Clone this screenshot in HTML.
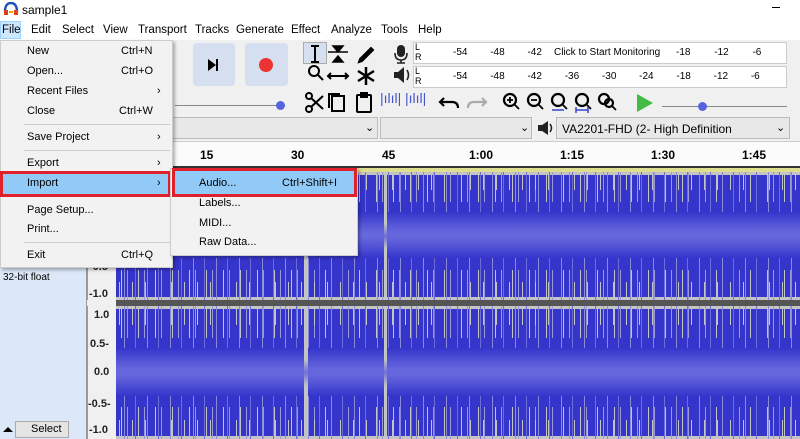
<!DOCTYPE html>
<html><head><meta charset="utf-8"><style>
*{margin:0;padding:0;box-sizing:border-box}
body{width:800px;height:439px;overflow:hidden;background:#f0f0f0;font-family:"Liberation Sans",Arial,sans-serif;font-size:11px;color:#000;position:relative}
.a{position:absolute}
.t{position:absolute;white-space:nowrap}
.btn{position:absolute;background:#d6dff0;border-radius:4px}
.menu{position:absolute;background:#f2f2f2;border:1px solid #ccc;box-shadow:2px 2px 3px rgba(0,0,0,.3)}
.mi{position:absolute;font-size:11px}
.sep{position:absolute;height:1px;background:#ccc}
.wave{position:absolute;left:116px;width:684px;background:#c4c4c4;overflow:hidden}
.wave .d{position:absolute;left:0;right:0;background:#3535cc}
.wave .g1{position:absolute;left:0;right:0;background:repeating-linear-gradient(90deg,transparent 0 5px,#c4c4c4 5px 6px,transparent 6px 11px,#9a9ad8 11px 12px,transparent 12px 17px)}
.wave .g2{position:absolute;left:0;right:0;background:repeating-linear-gradient(90deg,transparent 0 3px,#c4c4c4 3px 4px,transparent 4px 13px)}
.wave .g3{position:absolute;left:0;right:0;background:repeating-linear-gradient(90deg,transparent 0 8px,#8a8ad8 8px 9px,transparent 9px 19px,#6d6dd8 19px 20px,transparent 20px 23px)}
.wave .l{position:absolute;left:0;right:0}
.vr{position:absolute;left:87px;width:29px;background:#f0f0f0;border-left:1px solid #999}
.vl{position:absolute;right:3px;font-weight:bold;font-size:11px;color:#222}
</style></head><body>
<div class="a" style="left:0;top:0;width:800px;height:20px;background:#fff"></div>
<svg class="a" style="left:3px;top:2px" width="16" height="14"><path d="M2 10 Q2 1 8 1 Q14 1 14 10" stroke="#2050c0" stroke-width="2.4" fill="none"/><rect x="1" y="8" width="4" height="5" fill="#e04020"/><rect x="11" y="8" width="4" height="5" fill="#e04020"/><rect x="6" y="9" width="4" height="2" fill="#f0a000"/></svg>
<div class="t" style="left:22px;top:3px;font-size:12px">sample1</div>
<div class="a" style="left:772px;top:7px;width:8px;height:1px;background:#000"></div>
<div class="a" style="left:0;top:20px;width:800px;height:20px;background:#fff"></div>
<div class="a" style="left:0;top:21px;width:21px;height:18px;background:#cce8ff;border:1px solid #99d1ff"></div>
<div class="t" style="left:2px;top:24px;font-size:11.5px">File</div>
<div class="t" style="left:31px;top:24px;font-size:11.5px">Edit</div>
<div class="t" style="left:62px;top:24px;font-size:11.5px">Select</div>
<div class="t" style="left:103px;top:24px;font-size:11.5px">View</div>
<div class="t" style="left:138px;top:24px;font-size:11.5px">Transport</div>
<div class="t" style="left:195px;top:24px;font-size:11.5px">Tracks</div>
<div class="t" style="left:236px;top:24px;font-size:11.5px">Generate</div>
<div class="t" style="left:291px;top:24px;font-size:11.5px">Effect</div>
<div class="t" style="left:331px;top:24px;font-size:11.5px">Analyze</div>
<div class="t" style="left:381px;top:24px;font-size:11.5px">Tools</div>
<div class="t" style="left:418px;top:24px;font-size:11.5px">Help</div>
<div class="a" style="left:0;top:40px;width:800px;height:100px;background:#f0f0f0"></div>
<div class="btn" style="left:193px;top:43px;width:42px;height:43px"></div>
<div class="a" style="left:208px;top:59px;width:0;height:0;border-left:8px solid #000;border-top:6px solid transparent;border-bottom:6px solid transparent"></div>
<div class="a" style="left:216px;top:59px;width:2px;height:12px;background:#000"></div>
<div class="btn" style="left:245px;top:43px;width:43px;height:43px"></div>
<div class="a" style="left:259px;top:58px;width:14px;height:14px;border-radius:50%;background:#e33"></div>
<div class="a" style="left:175px;top:105px;width:108px;height:1px;background:#888"></div>
<div class="a" style="left:276px;top:101px;width:9px;height:9px;border-radius:50%;background:#5566dd"></div>
<!-- tools -->
<div class="a" style="left:303px;top:42px;width:24px;height:22px;background:#d6dff0;border:1px solid #aaa"></div>
<svg class="a" style="left:300px;top:40px" width="80" height="76" fill="none" stroke="#000" stroke-width="2">
<path d="M11 6h8M15 6v16M11 22h8"/>
<path d="M28 12h20M33 6h10l-5 6zM33 22h10l-5-6z" fill="#000" stroke-width="1.5"/>
<path d="M59 22l3-1 11-11-2-2-11 11z" fill="#000"/>
<circle cx="14" cy="31" r="5"/><path d="M18 35l5 5"/>
<path d="M28 36h20M31 33l-3 3 3 3M45 33l3 3-3 3"/>
<path d="M66 27v18M58 31l16 10M74 31l-16 10" stroke-width="2.5"/>
<circle cx="9" cy="56" r="3"/><circle cx="9" cy="69" r="3"/><path d="M11 58l12 11M11 67l12-11"/>
<rect x="32" y="56" width="12" height="15"/><path d="M29 68v-14h11"/>
<rect x="57" y="55" width="14" height="17" rx="1"/><path d="M61 53h6v4h-6z" fill="#000"/>
</svg>
<div class="t" style="left:380px;top:90px;font-size:14px;color:#4455cc">|ılıl|</div>
<div class="t" style="left:405px;top:90px;font-size:14px;color:#4455cc">|ılıl|</div>
<svg class="a" style="left:436px;top:90px" width="200" height="24" fill="none" stroke="#000" stroke-width="2.2">
<path d="M8 8l-4 4 4 4M4 12h12c4 0 6 2 6 6"/>
<path d="M46 8l4 4-4 4M50 12H38c-4 0-6 2-6 6" stroke="#aaa"/>
<circle cx="74" cy="10" r="6"/><path d="M78 14l5 5M71 10h6M74 7v6" stroke-width="1.8"/>
<circle cx="98" cy="10" r="6"/><path d="M102 14l5 5M95 10h6" stroke-width="1.8"/>
<circle cx="122" cy="10" r="6"/><path d="M126 14l5 5" stroke-width="1.8"/><path d="M116 20h12" stroke="#3344cc" stroke-width="1.5"/>
<circle cx="146" cy="10" r="6"/><path d="M150 14l5 5" stroke-width="1.8"/><path d="M140 20h12M140 17v6M152 17v6" stroke="#3344cc" stroke-width="1.5"/>
<circle cx="168" cy="9" r="5"/><circle cx="173" cy="13" r="4"/><path d="M176 16l4 4" stroke-width="1.8"/>
</svg>
<div class="a" style="left:637px;top:94px;width:0;height:0;border-left:16px solid #44bb44;border-top:9px solid transparent;border-bottom:9px solid transparent"></div>
<div class="a" style="left:662px;top:106px;width:125px;height:1px;background:#888"></div>
<div class="a" style="left:698px;top:102px;width:9px;height:9px;border-radius:50%;background:#5566dd"></div>
<!-- meters -->
<svg class="a" style="left:390px;top:42px" width="22" height="46"><rect x="7" y="3" width="8" height="12" rx="4" fill="#222"/><path d="M5 11q0 7 6 7q6 0 6-7M11 18v3M7 21h8" stroke="#222" stroke-width="1.6" fill="none"/><path d="M4 30h4l6-5v16l-6-5H4z" fill="#222"/><path d="M17 28q3 5 0 10" stroke="#222" stroke-width="1.6" fill="none"/></svg>
<div class="a" style="left:413px;top:42px;width:374px;height:22px;background:#fff;border:1px solid #ccc"></div>
<div class="a" style="left:413px;top:66px;width:374px;height:22px;background:#fff;border:1px solid #ccc"></div>
<div class="t" style="left:415px;top:42px;font-size:9px;line-height:10px">L<br>R</div>
<div class="t" style="left:415px;top:66px;font-size:9px;line-height:10px">L<br>R</div>
<div class="t" style="left:453px;top:47px;font-size:10px;word-spacing:20px">-54 -48 -42</div>
<div class="t" style="left:554px;top:47px;font-size:10px">Click to Start Monitoring</div>
<div class="t" style="left:676px;top:47px;font-size:10px;word-spacing:21px">-18 -12 -6 &nbsp;0</div>
<div class="t" style="left:453px;top:71px;font-size:10px;word-spacing:20px">-54 -48 -42 -36 -30 -24 -18 -12 -6 &nbsp;0</div>
<!-- device row -->
<div class="a" style="left:172px;top:117px;width:206px;height:22px;background:#e8e8e8;border:1px solid #bbb"></div>
<div class="t" style="left:365px;top:121px">⌄</div>
<svg class="a" style="left:536px;top:120px" width="18" height="16"><path d="M2 5h4l6-4v14l-6-4H2z" fill="#222"/><path d="M14 4q3 4 0 8" stroke="#222" stroke-width="1.6" fill="none"/></svg>
<div class="a" style="left:556px;top:117px;width:234px;height:22px;background:#e8e8e8;border:1px solid #bbb"></div>
<div class="t" style="left:562px;top:122px;font-size:12px">VA2201-FHD (2- High Definition</div>
<div class="t" style="left:776px;top:121px">⌄</div>
<div class="a" style="left:380px;top:117px;width:152px;height:22px;background:#e8e8e8;border:1px solid #bbb"></div>
<div class="t" style="left:520px;top:121px">⌄</div>
<!-- ruler -->
<div class="a" style="left:0;top:141px;width:800px;height:27px;background:#fbfbfb;border-top:1px solid #ccc"></div>
<div class="a" style="left:0;top:166px;width:800px;height:2px;background:#333"></div>
<div class="a" style="left:116px;top:168px;width:684px;height:4px;background:#dede90"></div>
<div class="t" style="left:200px;top:148px;font-weight:bold;font-size:12px">15</div>
<div class="t" style="left:291px;top:148px;font-weight:bold;font-size:12px">30</div>
<div class="t" style="left:382px;top:148px;font-weight:bold;font-size:12px">45</div>
<div class="t" style="left:469px;top:148px;font-weight:bold;font-size:12px">1:00</div>
<div class="t" style="left:560px;top:148px;font-weight:bold;font-size:12px">1:15</div>
<div class="t" style="left:651px;top:148px;font-weight:bold;font-size:12px">1:30</div>
<div class="t" style="left:742px;top:148px;font-weight:bold;font-size:12px">1:45</div>
<!-- track panel -->
<div class="a" style="left:0;top:168px;width:87px;height:271px;background:#dce7f7;border-right:1px solid #999"></div>
<div class="t" style="left:3px;top:272px;font-size:10px">32-bit float</div>
<div class="a" style="left:15px;top:421px;width:54px;height:17px;background:#e4e4e4;border:1px solid #aaa"></div>
<div class="t" style="left:31px;top:423px;font-size:11px">Select</div>
<div class="a" style="left:3px;top:427px;width:0;height:0;border-bottom:5px solid #000;border-left:5px solid transparent;border-right:5px solid transparent"></div>
<div class="vr" style="top:172px;height:128px"></div>
<div class="vr" style="top:306px;height:133px"></div>
<div class="vl" style="left:89px;top:261px">-0.5</div>
<div class="vl" style="left:89px;top:288px">-1.0</div>
<div class="vl" style="left:94px;top:309px">1.0</div>
<div class="vl" style="left:90px;top:338px">0.5-</div>
<div class="vl" style="left:94px;top:366px">0.0</div>
<div class="vl" style="left:88px;top:398px">-0.5-</div>
<div class="vl" style="left:89px;top:424px">-1.0</div>
<!-- waves -->
<div class="wave" style="top:172px;height:128px">
 <div class="d" style="top:3px;bottom:3px"></div>
 <div class="g1" style="top:0;height:30px"></div><div class="g2" style="top:0;height:18px"></div><div class="g3" style="top:0;height:42px"></div>
 <div class="g1" style="bottom:0;height:30px"></div><div class="g2" style="bottom:0;height:18px"></div><div class="g3" style="bottom:0;height:42px"></div>
 <div class="l" style="top:40px;height:46px;background:linear-gradient(#3535cc,#5858d8 30%,#6767dd 45%,#6767dd 55%,#5858d8 70%,#3535cc)"></div>
 <div class="a" style="left:188px;top:0;width:4px;height:128px;background:linear-gradient(#c4c4c4 40%,#7070d8 50%,#c4c4c4 60%)"></div>
 <div class="a" style="left:268px;top:0;width:3px;height:128px;background:linear-gradient(#c4c4c4 40%,#7070d8 50%,#c4c4c4 60%)"></div>
</div>
<div class="a" style="left:116px;top:300px;width:684px;height:6px;background:#555"></div>
<div class="wave" style="top:306px;height:133px">
 <div class="d" style="top:3px;bottom:3px"></div>
 <div class="g1" style="top:0;height:32px"></div><div class="g2" style="top:0;height:19px"></div><div class="g3" style="top:0;height:44px"></div>
 <div class="g1" style="bottom:0;height:32px"></div><div class="g2" style="bottom:0;height:19px"></div><div class="g3" style="bottom:0;height:44px"></div>
 <div class="l" style="top:42px;height:48px;background:linear-gradient(#3535cc,#5858d8 30%,#6767dd 45%,#6767dd 55%,#5858d8 70%,#3535cc)"></div>
 <div class="a" style="left:188px;top:0;width:4px;height:133px;background:linear-gradient(#c4c4c4 40%,#7070d8 50%,#c4c4c4 60%)"></div>
 <div class="a" style="left:268px;top:0;width:3px;height:133px;background:linear-gradient(#c4c4c4 40%,#7070d8 50%,#c4c4c4 60%)"></div>
</div>
<!-- file menu -->
<div class="menu" style="left:0;top:40px;width:173px;height:228px"></div>
<div class="mi" style="left:27px;top:45px">New</div><div class="mi" style="left:121px;top:45px">Ctrl+N</div>
<div class="mi" style="left:27px;top:65px">Open...</div><div class="mi" style="left:121px;top:65px">Ctrl+O</div>
<div class="mi" style="left:27px;top:85px">Recent Files</div><div class="mi" style="left:157px;top:85px">›</div>
<div class="mi" style="left:27px;top:105px">Close</div><div class="mi" style="left:119px;top:105px">Ctrl+W</div>
<div class="sep" style="left:24px;top:124px;width:146px"></div>
<div class="mi" style="left:27px;top:131px">Save Project</div><div class="mi" style="left:157px;top:131px">›</div>
<div class="sep" style="left:24px;top:150px;width:146px"></div>
<div class="mi" style="left:27px;top:157px">Export</div><div class="mi" style="left:157px;top:157px">›</div>
<div class="a" style="left:0;top:171px;width:171px;height:26px;border:3px solid #e0202a;background:#91c9f7"></div>
<div class="mi" style="left:27px;top:177px">Import</div><div class="mi" style="left:157px;top:177px">›</div>
<div class="mi" style="left:27px;top:204px">Page Setup...</div>
<div class="mi" style="left:27px;top:223px">Print...</div>
<div class="sep" style="left:24px;top:242px;width:146px"></div>
<div class="mi" style="left:27px;top:249px">Exit</div><div class="mi" style="left:121px;top:249px">Ctrl+Q</div>
<!-- submenu -->
<div class="menu" style="left:170px;top:168px;width:188px;height:88px"></div>
<div class="a" style="left:172px;top:168px;width:185px;height:29px;border:3px solid #e0202a;background:#91c9f7"></div>
<div class="mi" style="left:199px;top:177px">Audio...</div><div class="mi" style="left:282px;top:177px">Ctrl+Shift+I</div>
<div class="mi" style="left:199px;top:197px">Labels...</div>
<div class="mi" style="left:199px;top:217px">MIDI...</div>
<div class="mi" style="left:199px;top:236px">Raw Data...</div>
</body></html>
